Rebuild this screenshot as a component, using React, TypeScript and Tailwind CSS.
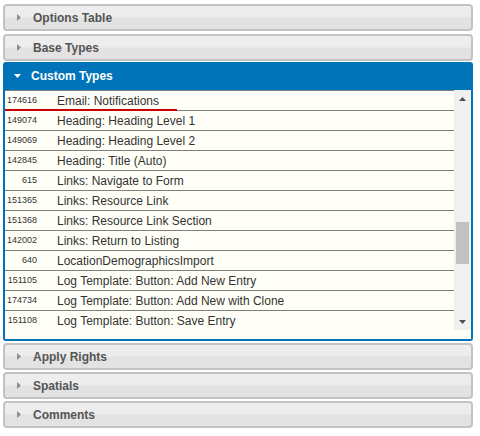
import React from "react";

const rows: [string, string][] = [
  ["174616", "Email: Notifications"],
  ["149074", "Heading: Heading Level 1"],
  ["149069", "Heading: Heading Level 2"],
  ["142845", "Heading: Title (Auto)"],
  ["615", "Links: Navigate to Form"],
  ["151365", "Links: Resource Link"],
  ["151368", "Links: Resource Link Section"],
  ["142002", "Links: Return to Listing"],
  ["640", "LocationDemographicsImport"],
  ["151105", "Log Template: Button: Add New Entry"],
  ["174734", "Log Template: Button: Add New with Clone"],
  ["151108", "Log Template: Button: Save Entry"],
];

function Header({ title, className = "" }: { title: string; className?: string }) {
  return (
    <div
      className={
        "h-[27px] rounded-[4px] border-2 border-[#c3c3c3] bg-[linear-gradient(#eeeeee_0%,#ececec_48%,#e2e2e2_52%,#e3e3e3_100%)] flex items-center pl-[12px] " +
        className
      }
    >
      <svg width="4" height="7" viewBox="0 0 4 7" className="shrink-0">
        <polygon points="0,0 4,3.5 0,7" fill="#8e8e8e" />
      </svg>
      <span className="ml-[12px] text-[12px] font-bold text-[#555555] leading-none">{title}</span>
    </div>
  );
}

export default function App() {
  return (
    <div
      className="w-[480px] h-[436px] bg-white pt-[4px] pl-[3px]"
      style={{ fontFamily: '"Liberation Sans", Arial, sans-serif' }}
    >
      <div className="w-[470px] flex flex-col">
        <Header title="Options Table" />
        <Header title="Base Types" className="mt-[3px]" />
        {/* Active panel */}
        <div className="mt-[1px]">
          <div className="h-[28px] bg-[#0073b9] rounded-t-[3px] flex items-center pl-[11px]">
            <svg width="7" height="4" viewBox="0 0 7 4" className="shrink-0">
              <polygon points="0,0 7,0 3.5,4" fill="#ffffff" />
            </svg>
            <span className="ml-[10px] text-[12px] font-bold text-white leading-none">Custom Types</span>
          </div>
          <div className="border-x-2 border-b-2 border-[#0073b9] rounded-b-[3px] bg-[#fffff8] pb-[9px]">
            <div className="relative flex h-[240px] overflow-hidden">
              <div className="flex-1 flex flex-col">
                {rows.map(([id, name]) => (
                  <div
                    key={id}
                    className="h-[20px] shrink-0 border-t border-[#7f7f7f] flex items-center text-[#333333]"
                  >
                    <span className="w-[32px] text-right text-[9px] leading-none">{id}</span>
                    <span className="ml-[20px] text-[12px] leading-none whitespace-nowrap">{name}</span>
                  </div>
                ))}
              </div>
              {/* scrollbar */}
              <div className="w-[17px] shrink-0 bg-[#f0f0f0] flex flex-col items-center">
                <div className="h-[17px] flex items-center justify-center">
                  <svg width="7" height="4" viewBox="0 0 7 4">
                    <polygon points="3.5,0 7,4 0,4" fill="#505050" />
                  </svg>
                </div>
                <div className="flex-1 w-full px-[2px] pt-[115px]">
                  <div className="h-[42px] bg-[#c1c1c1]" />
                </div>
                <div className="h-[17px] flex items-center justify-center">
                  <svg width="7" height="4" viewBox="0 0 7 4">
                    <polygon points="0,0 7,0 3.5,4" fill="#505050" />
                  </svg>
                </div>
              </div>
              {/* red underline annotation */}
              <div className="absolute left-0 top-[19px] w-[172px] h-[2px] bg-[#cc0000]" />
            </div>
          </div>
        </div>
        <Header title="Apply Rights" className="mt-[2px]" />
        <Header title="Spatials" className="mt-[2px]" />
        <Header title="Comments" className="mt-[2px]" />
      </div>
    </div>
  );
}
